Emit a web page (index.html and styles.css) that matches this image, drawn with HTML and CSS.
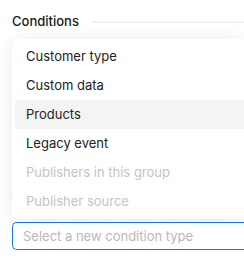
FILE: index.html
```html
<!DOCTYPE html>
<html>
<head>
<meta charset="utf-8">
<link rel="stylesheet" href="styles.css">
</head>
<body>
<div class="panel">
  <div class="heading">
    <span class="title">Conditions</span>
    <span class="rule"></span>
  </div>
  <div class="menu">
    <div class="item">Customer type</div>
    <div class="item">Custom data</div>
    <div class="item active">Products</div>
    <div class="item">Legacy event</div>
    <div class="item disabled">Publishers in this group</div>
    <div class="item disabled">Publisher source</div>
  </div>
  <div class="select">Select a new condition type</div>
</div>
</body>
</html>
```
FILE: styles.css
```css
html, body {
  margin: 0;
  padding: 0;
  background: #fff;
}
body {
  font-family: Inter, "Noto Sans", sans-serif;
  font-size: 13px;
  color: #1f1f1f;
}
.panel {
  padding: 12px 0 0 12px;
}
.heading {
  display: flex;
  align-items: center;
  gap: 13px;
  height: 18px;
}
.title {
  font-weight: 500;
  color: #1a1a1a;
}
.rule {
  flex: 1;
  height: 2px;
  background: #f2f2f2;
  margin-top: 2px;
}
.menu {
  margin-top: 9px;
  background: #fff;
  border-radius: 7px 0 0 7px;
  padding: 3px 0 3px 3px;
  box-shadow: 0 2px 18px rgba(0, 0, 0, 0.09);
}
.item {
  height: 29px;
  line-height: 29px;
  padding-left: 11px;
  border-radius: 4px 0 0 4px;
  color: #222;
  white-space: nowrap;
}
.item.active {
  background: #f4f4f4;
}
.item.disabled {
  color: #c4c4c4;
}
.select {
  margin-top: 3px;
  height: 26px;
  line-height: 26px;
  border: 1px solid #1a73f0;
  border-right: none;
  border-radius: 5px 0 0 5px;
  padding-left: 10px;
  color: #b8b8b8;
  background: #fff;
  white-space: nowrap;
}
```
